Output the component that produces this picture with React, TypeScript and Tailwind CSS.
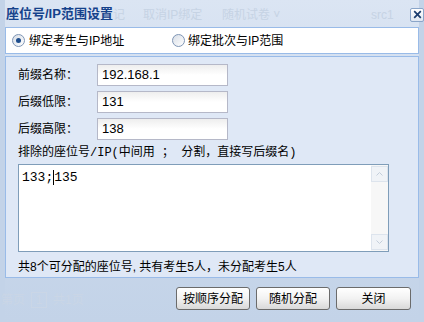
import React from "react";

const cjk = { fontFamily: '"Liberation Sans", "Noto Sans CJK SC", sans-serif' };

function Radio({ checked }: { checked: boolean }) {
  return (
    <span className="relative inline-block w-[13px] h-[13px] rounded-full border border-[#7e95b5] bg-gradient-to-br from-[#d8dee6] to-[#ffffff]">
      {checked && (
        <span className="absolute left-[3px] top-[3px] w-[5px] h-[5px] rounded-full bg-[#1e4d8c]" />
      )}
    </span>
  );
}

function Btn({ children, w }: { children: React.ReactNode; w: string }) {
  return (
    <button
      className={`${w} h-[23px] rounded-[3px] border border-[#6b6b6b] bg-gradient-to-b from-[#ffffff] via-[#f2f2f2] to-[#d9d9d9] text-[12px] text-black leading-none`}
      style={cjk}
    >
      {children}
    </button>
  );
}

export default function App() {
  return (
    <div className="w-[424px] h-[322px] bg-[#c6d5e9] relative overflow-hidden" style={cjk}>
      <div className="relative flex flex-col h-full border-l-[5px] border-r-[5px] border-[#c3d3e8] bg-gradient-to-b from-[#dbe5f3] via-[#cbd9ec] to-[#c3d3e8]">
        {/* faint background ghost text */}
        <div className="absolute left-[108px] top-[6px] text-[12px] text-[#c6d3e4] flex">
          <span className="w-[30px]">记</span>
          <span className="w-[79px]">取消IP绑定</span>
          <span>随机试卷 ˅</span>
        </div>
        <div className="absolute left-[366px] top-[6px] text-[12px] text-[#c6d3e4]">src1</div>
        <div className="absolute left-[-4px] top-[291px] text-[12px] text-[#cad6e6] flex items-center gap-[6px]">
          <span>第页</span>
          <span className="border border-[#cad6e6] w-[16px] h-[16px] inline-flex items-center justify-center">1</span>
          <span>共1页</span>
        </div>

        {/* title bar */}
        <div className="relative h-[27px] flex items-center justify-between pl-[1px]">
          <span className="text-[13px] font-bold text-[#15428b]" style={cjk}>
            座位号/IP范围设置
          </span>
          <span className="mr-[-5px] mt-[2px] w-[14px] h-[14px] border border-[#8aa5c9] rounded-[2px] bg-gradient-to-b from-[#ffffff] to-[#dfe7f2] flex items-center justify-center">
            <svg width="9" height="9" viewBox="0 0 9 9">
              <path d="M1.2 1.2 L7.8 7.8 M7.8 1.2 L1.2 7.8" stroke="#1a3c6e" strokeWidth="1.7" />
            </svg>
          </span>
        </div>

        {/* radio row */}
        <div className="relative h-[27px] bg-white border border-[#99bbe8] flex items-center text-[12px] text-black">
          <div className="flex items-center w-[166px] pl-[6px] gap-[4px]">
            <Radio checked />
            <span>绑定考生与IP地址</span>
          </div>
          <div className="flex items-center gap-[3px]">
            <Radio checked={false} />
            <span>绑定批次与IP范围</span>
          </div>
        </div>

        {/* form panel */}
        <div className="relative mt-[2px] h-[222px] bg-[#dfe8f6] border border-[#99bbe8] pl-[12px] pt-[7px] text-[12px] text-black">
          {[
            ["前缀名称：", "192.168.1"],
            ["后缀低限：", "131"],
            ["后缀高限：", "138"],
          ].map(([l, v]) => (
            <div key={l} className="flex items-center h-[22px] mb-[5px]">
              <span className="w-[79px]">{l}</span>
              <div className="w-[131px] h-[22px] border border-[#b5b8c8] bg-gradient-to-b from-[#eeeeee] via-white to-white px-[4px] flex items-center text-[13px]" style={{ fontFamily: '"Liberation Sans", sans-serif' }}>
                {v}
              </div>
            </div>
          ))}
          <div className="mt-[4px] h-[16px] leading-[16px] text-[12px]" style={{ fontFamily: '"Liberation Mono", "Noto Sans CJK SC", monospace' }}>
            排除的座位号/IP(中间用 ； 分割，直接写后缀名)
          </div>
          <div className="mt-[3px] w-[371px] h-[88px] bg-white border border-[#7f9db9] flex">
            <div className="flex-1 px-[3px] pt-[3px] text-[13px]" style={{ fontFamily: '"Liberation Mono", "DejaVu Sans Mono", monospace' }}>
              133;<span className="border-l border-black"></span>135
            </div>
            <div className="w-[17px] h-full flex flex-col justify-between bg-[#f7f7f7] py-[1px]">
              <div className="h-[16px] border border-[#dde4ed] bg-[#f0f3f7] flex items-center justify-center">
                <svg width="7" height="4" viewBox="0 0 7 4"><path d="M0.5 3.5 L3.5 0.5 L6.5 3.5" stroke="#c4cedb" fill="none" /></svg>
              </div>
              <div className="h-[16px] border border-[#dde4ed] bg-[#f0f3f7] flex items-center justify-center">
                <svg width="7" height="4" viewBox="0 0 7 4"><path d="M0.5 0.5 L3.5 3.5 L6.5 0.5" stroke="#c4cedb" fill="none" /></svg>
              </div>
            </div>
          </div>
          <div className="mt-[6px] text-[12px]">共8个可分配的座位号, 共有考生5人，未分配考生5人</div>
        </div>

        {/* buttons */}
        <div className="relative flex justify-end gap-[6px] mt-[9px] pr-[8px]">
          <Btn w="w-[74px]">按顺序分配</Btn>
          <Btn w="w-[74px]">随机分配</Btn>
          <Btn w="w-[75px]">关闭</Btn>
        </div>
      </div>
    </div>
  );
}
